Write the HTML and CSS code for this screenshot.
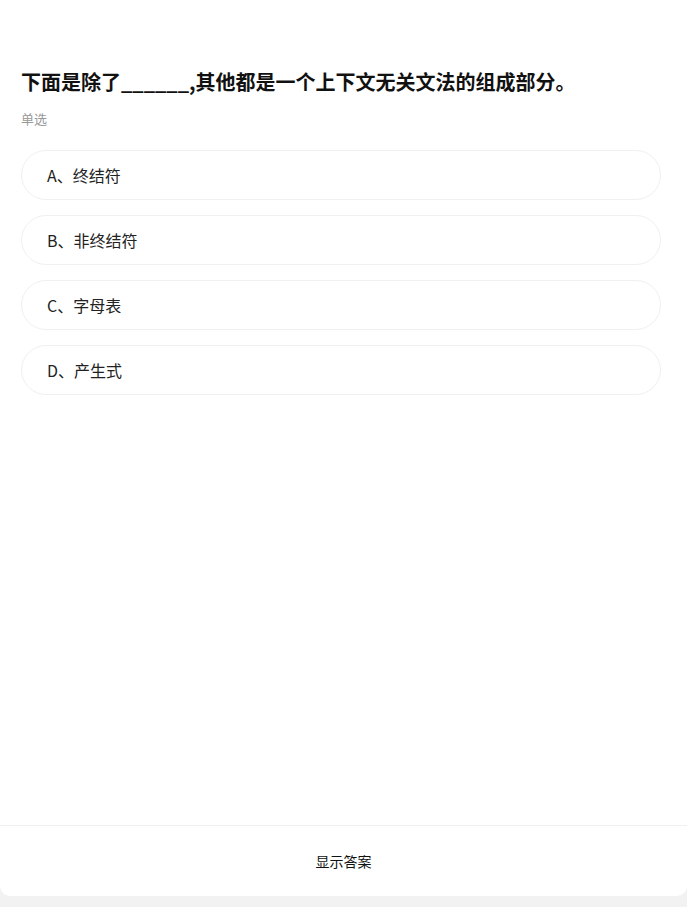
FILE: index.html
```html
<!DOCTYPE html>
<html lang="zh-CN">
<head>
    <meta charset="UTF-8">
    <title>单选题</title>
    <link rel="stylesheet" href="styles.css">
</head>
<body>
    <div class="pagina">
        <div class="conteudo">
            <h1 class="pergunta">下面是除了______,其他都是一个上下文无关文法的组成部分。</h1>
            <div class="tipo">单选</div>
            <ul class="opcoes">
                <li class="opcao">A、终结符</li>
                <li class="opcao">B、非终结符</li>
                <li class="opcao">C、字母表</li>
                <li class="opcao">D、产生式</li>
            </ul>
        </div>
        <div class="rodape">
            <button class="btn-resposta">显示答案</button>
        </div>
    </div>
</body>
</html>
```

FILE: styles.css
```css
body {
    font-family: "Noto Sans CJK SC", "Noto Sans", sans-serif;
    background-color: #f2f2f2;
    margin: 0;
    padding: 0;
    color: #111;
}

.pagina {
    height: 896px;
    background-color: #fff;
    border-radius: 0 0 10px 10px;
    display: flex;
    flex-direction: column;
}

.conteudo {
    flex: 1;
    padding: 68px 26px 0 21px;
}

.pergunta {
    font-size: 20px;
    line-height: 28px;
    font-weight: bold;
    margin: 0;
    color: #111;
}

.tipo {
    font-size: 13px;
    line-height: 20px;
    color: #999;
    margin-top: 13px;
}

.opcoes {
    list-style: none;
    margin: 21px 0 0;
    padding: 0;
    display: flex;
    flex-direction: column;
    gap: 15px;
}

.opcao {
    height: 48px;
    border: 1px solid #f0f0f0;
    border-radius: 25px;
    padding-left: 25px;
    display: flex;
    align-items: center;
    font-size: 16px;
    color: #222;
}

.rodape {
    height: 70px;
    border-top: 1px solid #f0f0f0;
    display: flex;
    align-items: center;
    justify-content: center;
}

.btn-resposta {
    background: none;
    border: none;
    font-family: inherit;
    font-size: 14px;
    color: #111;
    padding: 0;
    cursor: pointer;
}
```
